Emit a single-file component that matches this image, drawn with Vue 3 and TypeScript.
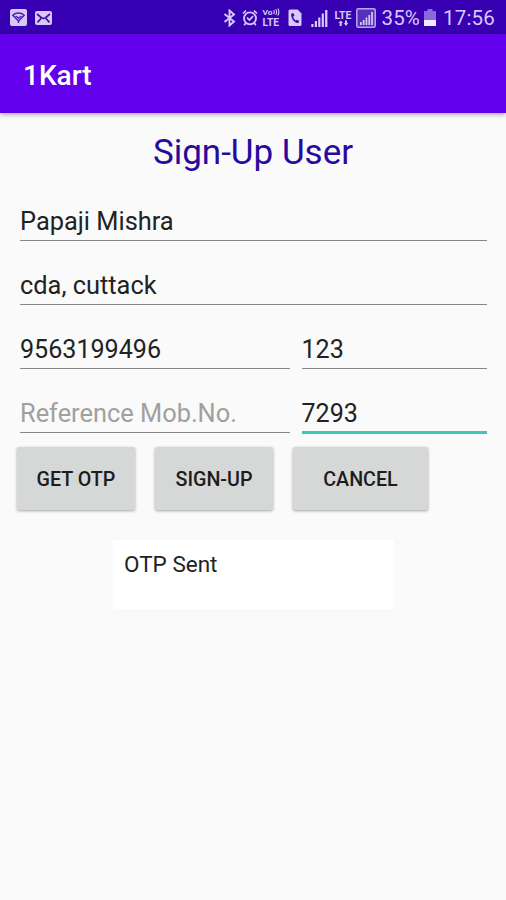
<script setup lang="ts">
import { reactive, ref } from 'vue'

const form = reactive({
  name: 'Papaji Mishra',
  address: 'cda, cuttack',
  mobile: '9563199496',
  pin: '123',
  reference: '',
  otp: '7293',
})
const message = ref('OTP Sent')
</script>

<template>
  <div class="screen">
    <header class="status">
      <svg class="note" width="17" height="17" viewBox="0 0 17 17">
        <rect width="17" height="17" rx="2" fill="#d9c8fa" />
        <path d="M2.8 6.2C5.8 3.4 11.2 3.4 14.2 6.2L8.5 12Z" fill="none" stroke="#4b20b4" stroke-width="1.5" />
        <path d="M5.6 7L8.5 9L11.4 7M8.5 11V14" fill="none" stroke="#4b20b4" stroke-width="1.5" />
      </svg>
      <svg class="mail" width="17" height="14" viewBox="0 0 17 14">
        <rect width="17" height="14" rx="2" fill="#d9c8fa" />
        <path d="M2 3L6.5 6.7Q8.5 8 10.5 6.7L15 3M2.5 11.3L6 7.5M14.5 11.3L11 7.5" fill="none" stroke="#3c149f" stroke-width="1.7" />
      </svg>
      <span class="spacer"></span>
      <svg class="bluetooth" width="13" height="18" viewBox="0 0 13 18">
        <path d="M1.5 5L11 12.5L6.5 16.5V1.5L11 5.5L1.5 13" fill="none" stroke="#d9c8fa" stroke-width="1.9" />
      </svg>
      <svg class="alarm" width="16" height="18" viewBox="0 0 16 18">
        <circle cx="8" cy="9.3" r="6" fill="none" stroke="#d9c8fa" stroke-width="1.8" />
        <path d="M1 4.5L4 1.6M12 1.6L15 4.5M3.8 14L2.2 16.3M12.2 14L13.8 16.3M5 8.6L7.5 11L11 7.2" fill="none" stroke="#d9c8fa" stroke-width="1.7" />
      </svg>
      <span class="volte">
        <svg width="18" height="8" viewBox="0 0 18 8">
          <text class="vo" x="0.5" y="6.8" textLength="10" lengthAdjust="spacingAndGlyphs">Vo</text>
          <path d="M11.6 2Q13 4 11.6 6M13.7 1.2Q15.6 4 13.7 6.8M15.8 0.5Q18 4 15.8 7.5" fill="none" stroke="#d9c8fa" stroke-width="1.1" />
        </svg>
        <svg width="18" height="14" viewBox="0 0 18 14">
          <text class="lte" x="0.5" y="9.8" textLength="16.5" lengthAdjust="spacingAndGlyphs">LTE</text>
        </svg>
      </span>
      <svg class="sim" width="14" height="18" viewBox="0 0 14 18">
        <path d="M2 0.5H9.7L13.5 4.5V15.5Q13.5 17 12 17H2Q0.5 17 0.5 15.5V2Q0.5 0.5 2 0.5Z" fill="#d9c8fa" />
        <path d="M4.3 5C3.7 9 6.2 12.7 10.2 13.2" fill="none" stroke="#3b11a9" stroke-width="1.7" />
        <path d="M4.3 4.5L5.2 7.4M7.9 11.9L10.7 12.9" stroke="#3b11a9" stroke-width="2.7" />
      </svg>
      <svg class="signal" width="17" height="18" viewBox="0 0 17 18">
        <path d="M0.3 15H2.5V18H0.3ZM3.8 12H6V18H3.8ZM7.2 8.5H9.4V18H7.2ZM10.7 4.5H12.9V18H10.7ZM14.1 1H16.4V18H14.1Z" fill="#d9c8fa" />
      </svg>
      <svg class="data" width="18" height="18" viewBox="0 0 18 18">
        <text class="lte" x="0.5" y="9.5" textLength="17" lengthAdjust="spacingAndGlyphs">LTE</text>
        <path d="M4.5 14L6.7 11.5L8.9 14H7.7V17H5.7V14ZM9.8 14H11V11.5H13V14H14.2L12 17Z" fill="#d9c8fa" />
      </svg>
      <svg class="signal-box" width="20" height="20" viewBox="0 0 20 20">
        <rect x="0.8" y="0.8" width="18.4" height="18.4" rx="1.5" fill="#5530bd" stroke="#bda5ed" stroke-width="1.5" />
        <path d="M4 14H5.7V17H4ZM6.8 12H8.5V17H6.8ZM9.6 9.5H11.3V17H9.6ZM12.4 7H14.1V17H12.4ZM15.2 4H16.9V17H15.2Z" fill="#d9c8fa" />
      </svg>
      <span class="percent">35%</span>
      <svg class="battery" width="12" height="17" viewBox="0 0 12 17">
        <path d="M3.5 0H8.5V2H12V17H0V2H3.5Z" fill="#8b69d8" />
        <path d="M0 11H12V17H0Z" fill="#f1e9ff" />
      </svg>
      <span class="clock">17:56</span>
    </header>

    <div class="appbar"><span>1Kart</span></div>

    <main>
      <h1>Sign-Up User</h1>
      <form @submit.prevent>
        <div class="row"><input v-model="form.name" type="text" /></div>
        <div class="row"><input v-model="form.address" type="text" /></div>
        <div class="row split">
          <input v-model="form.mobile" class="digits" type="text" />
          <input v-model="form.pin" class="digits" type="text" />
        </div>
        <div class="row split">
          <input v-model="form.reference" type="text" placeholder="Reference Mob.No." />
          <input v-model="form.otp" class="digits active" type="text" />
        </div>
        <div class="actions">
          <button type="button">GET OTP</button>
          <button type="button">SIGN-UP</button>
          <button type="button" class="wide">CANCEL</button>
        </div>
      </form>
      <div class="message">{{ message }}</div>
    </main>
  </div>
</template>

<style>
body {
  margin: 0;
  background: #fafafa;
}
</style>

<style scoped>
.screen {
  height: 900px;
  overflow: hidden;
  background: #fafafa;
  font-family: Roboto, sans-serif;
  color: #222;
}
.status {
  box-sizing: border-box;
  display: flex;
  align-items: center;
  height: 34px;
  padding: 1px 11px 0 10px;
  background: #3700b3;
  color: #d9c8fa;
  font-size: 20px;
}
.status svg {
  flex: none;
}
.status text {
  fill: #d9c8fa;
  font-family: Roboto, sans-serif;
  font-weight: 700;
}
.status .vo {
  font-size: 8px;
}
.status .lte {
  font-size: 11px;
}
.mail { margin-left: 8px; }
.spacer { flex: 1; }
.alarm { margin-left: 6px; }
.volte {
  display: flex;
  flex-direction: column;
  margin-left: 4px;
  padding-top: 3px;
}
.sim { margin-left: 8px; }
.signal { margin-left: 9px; }
.data { margin-left: 6px; }
.signal-box { margin-left: 4px; }
.percent {
  margin-left: 5.5px;
  font-size: 20.5px;
  letter-spacing: 0.1px;
}
.battery { margin-left: 4px; }
.clock {
  margin-left: 7px;
  font-size: 20.5px;
  letter-spacing: 0.2px;
}
.appbar {
  position: relative;
  box-sizing: border-box;
  display: flex;
  align-items: center;
  height: 79px;
  padding: 4px 0 0 23px;
  background: #6200ee;
  box-shadow: 0 1px 5px rgba(0, 0, 0, 0.4);
  color: #fff;
  font-size: 28px;
  font-weight: 500;
}
main {
  padding: 18px 17px 0;
}
h1 {
  margin: 0;
  color: #2a0a9e;
  font-size: 35px;
  font-weight: 400;
  line-height: 44px;
  text-align: center;
}
form {
  padding-top: 3px;
}
.row {
  display: grid;
  height: 64px;
  padding: 0 2px 0 3px;
}
.split {
  grid-template-columns: 270px 1fr;
  column-gap: 11.5px;
}
input {
  box-sizing: border-box;
  width: 100%;
  height: 63px;
  min-width: 0;
  margin: 0;
  padding: 24px 0 0;
  border: 0;
  border-bottom: 1.5px solid #858585;
  border-radius: 0;
  outline: 0;
  background: transparent;
  color: #222;
  font: 400 25.4px Roboto, sans-serif;
}
input::placeholder {
  color: #a0a0a0;
  opacity: 1;
}
input.digits {
  font-size: 25.1px;
}
input.active {
  height: 64px;
  padding-top: 25px;
  border-bottom: 3px solid #3fc7b9;
}
.actions {
  display: flex;
  gap: 20px;
  padding-top: 13px;
}
button {
  width: 118px;
  height: 63px;
  padding: 2px 0 0;
  border: 0;
  border-radius: 2px;
  background: #d6d7d7;
  box-shadow: 0 1px 3px rgba(0, 0, 0, 0.35);
  color: #1c1c1c;
  font: 500 19.7px Roboto, sans-serif;
}
button.wide {
  width: 135px;
}
.message {
  box-sizing: border-box;
  width: 281px;
  height: 69px;
  margin: 30px 0 0 96px;
  padding: 11px;
  background: #fff;
  font-size: 22.5px;
  line-height: 26px;
}
</style>
